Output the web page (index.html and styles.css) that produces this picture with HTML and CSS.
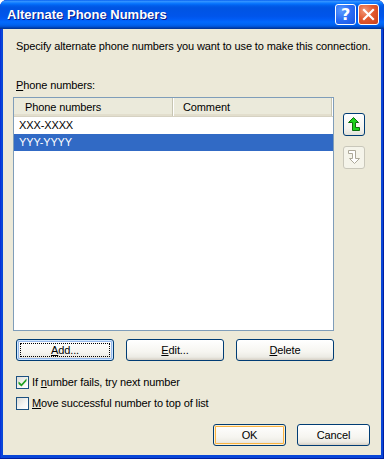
FILE: index.html
```html
<!DOCTYPE html>
<html>
<head>
<meta charset="utf-8">
<link rel="stylesheet" href="styles.css">
</head>
<body>
<div class="window">
  <div class="titlebar">
    <span class="title">Alternate Phone Numbers</span>
    <span class="tb-btn help">?</span>
    <span class="tb-btn close">
      <svg width="13" height="13" viewBox="0 0 13 13"><path d="M2 2 L11 11 M11 2 L2 11" stroke="#fff" stroke-width="2.2" stroke-linecap="square"/></svg>
    </span>
  </div>
  <div class="client">
    <p class="intro">Specify alternate phone numbers you want to use to make this connection.</p>
    <p class="label"><u>P</u>hone numbers:</p>
    <div class="list-area">
      <div class="listview">
        <div class="lv-header">
          <div class="col col1">Phone numbers</div>
          <div class="col col2">Comment</div>
          <div class="col col3"></div>
        </div>
        <div class="lv-row">XXX-XXXX</div>
        <div class="lv-row selected">YYY-YYYY</div>
      </div>
      <div class="arrows">
        <div class="arrow-btn">
          <svg width="12" height="15" viewBox="0 0 12 15">
            <path d="M5.5 0.5 L10.5 5.5 L7.5 5.5 L7.5 10.5 L11.5 10.5 L11.5 13.5 L4.5 13.5 L4.5 5.5 L0.5 5.5 Z" fill="#1BD31B" stroke="#0B6E0B" stroke-width="1" stroke-linejoin="miter"/>
          </svg>
        </div>
        <div class="arrow-btn disabled">
          <svg width="12" height="15" viewBox="0 0 12 15">
            <path d="M0.5 0.5 L7.5 0.5 L7.5 8.5 L11.5 8.5 L6.5 13.5 L1.5 8.5 L4.5 8.5 L4.5 3.5 L0.5 3.5 Z" fill="#fff" stroke="#ACA899" stroke-width="1"/>
          </svg>
        </div>
      </div>
    </div>
    <div class="btn-row">
      <button class="btn focused"><span class="focus-rect"><u>A</u>dd...</span></button>
      <button class="btn"><u>E</u>dit...</button>
      <button class="btn"><u>D</u>elete</button>
    </div>
    <label class="check">
      <span class="box checked">
        <svg width="9" height="9" viewBox="0 0 9 9"><path d="M0.5 3.5 L3.5 6 L8.5 0.5 L8.5 3 L3.5 8.5 L0.5 6 Z" fill="#21A121"/></svg>
      </span>
      <span>If <u>n</u>umber fails, try next number</span>
    </label>
    <label class="check">
      <span class="box"></span>
      <span><u>M</u>ove successful number to top of list</span>
    </label>
    <div class="footer">
      <button class="btn hot">OK</button>
      <button class="btn">Cancel</button>
    </div>
  </div>
</div>
</body>
</html>
```
FILE: styles.css
```css
* { box-sizing: border-box; }
html, body { margin: 0; padding: 0; background: #ffffff; }
body {
  font-family: "Liberation Sans", Arial, sans-serif;
  font-size: 11px;
  letter-spacing: -0.12px;
  color: #000;
}

.window {
  width: 384px;
  height: 459px;
  background: #0846D8;
  border-radius: 7px 7px 0 0;
  display: flex;
  flex-direction: column;
  overflow: hidden;
  box-shadow: inset 0 -1px 0 #001EA0, inset 1px 0 0 #0831D9, inset -1px 0 0 #001EA0;
}

.titlebar {
  height: 29px;
  flex: none;
  display: flex;
  align-items: center;
  padding: 0 5px 0 7px;
  background: linear-gradient(to bottom, #0058EE 0%, #3593FF 4%, #288EFF 7%, #127DFF 10%, #036FFC 14%, #0262EE 18%, #0057E5 24%, #0054E3 30%, #0055EB 56%, #005BF5 66%, #026AFE 76%, #0062EF 86%, #0052D6 92%, #0040AB 96%, #003092 100%);
}
.title {
  flex: 1;
  color: #fff;
  font-weight: bold;
  font-size: 13px;
  letter-spacing: 0;
  text-shadow: 1px 1px 0 #0A1883;
}
.tb-btn {
  width: 21px;
  height: 21px;
  border: 1px solid #fff;
  border-radius: 3px;
  display: flex;
  align-items: center;
  justify-content: center;
  color: #fff;
  margin-left: 2px;
}
.help {
  background: radial-gradient(circle at 30% 30%, #5C9BFF 0%, #2A6CF5 50%, #1A55E0 100%);
  font: bold 16px "DejaVu Sans", sans-serif;
}
.close {
  background: radial-gradient(circle at 30% 30%, #F29A7A 0%, #E35A2F 45%, #C9401A 100%);
}

.client {
  flex: 1;
  margin: 0 3px 4px 3px;
  background: #ECE9D8;
  padding: 11px 0 0 10px;
  display: flex;
  flex-direction: column;
}
.intro { margin: 0 0 0 3px; line-height: 13px; white-space: nowrap; }
.label { margin: 26px 0 0 3px; line-height: 13px; }

.list-area {
  display: flex;
  margin-top: 5px;
}
.listview {
  width: 321px;
  height: 234px;
  border: 1px solid #7F9DB9;
  background: #fff;
}
.lv-header {
  display: flex;
  height: 19px;
  background: #EBEADB;
  border-bottom: 1px solid #D6D2C2;
  box-shadow: inset 0 -2px 0 #E2DECD;
}
.col {
  flex: none;
  line-height: 18px;
  padding-left: 11px;
  border-right: 1px solid #C7C5B2;
  box-shadow: 1px 0 0 #fff;
}
.col1 { width: 159px; }
.col2 { width: 159px; padding-left: 10px; }
.col3 { flex: 1 1 auto; padding: 0; border-right: none; box-shadow: none; }
.lv-row {
  height: 17px;
  line-height: 17px;
  padding-left: 5px;
}
.lv-row.selected { background: #316AC5; color: #fff; }

.arrows {
  display: flex;
  flex-direction: column;
  gap: 10px;
  margin: 16px 0 0 9px;
}
.arrow-btn {
  width: 22px;
  height: 23px;
  border: 1px solid #003C74;
  border-radius: 3px;
  background: linear-gradient(to bottom, #FFFFFF 0%, #F4F3EE 70%, #E3E2DA 100%);
  display: flex;
  align-items: center;
  justify-content: center;
}
.arrow-btn.disabled {
  border-color: #C9C7BA;
  background: #F5F4EA;
}

.btn {
  font: 11px "Liberation Sans", Arial, sans-serif;
  letter-spacing: -0.12px;
  color: #000;
  height: 22px;
  border: 1px solid #003C74;
  border-radius: 3px;
  background: linear-gradient(to bottom, #FFFFFF 0%, #F6F5F0 60%, #ECEBE4 85%, #D6D0C5 100%);
  padding: 0;
  display: flex;
  align-items: center;
  justify-content: center;
}
.btn-row {
  display: flex;
  gap: 12px;
  margin: 8px 0 0 3px;
}
.btn-row .btn { width: 98px; }
.btn.focused {
  box-shadow: inset 0 0 0 1px #CEE7FF, inset 0 0 0 2px #98B8EA;
}
.focus-rect {
  display: flex;
  align-items: center;
  justify-content: center;
  width: calc(100% - 6px);
  height: calc(100% - 6px);
  border: 1px dotted #000;
}
.btn.hot {
  box-shadow: inset 0 0 0 1px #FFF0CF, inset 0 0 0 2px #F9B343;
}

.check {
  display: flex;
  align-items: center;
  gap: 3px;
  margin-left: 3px;
  height: 13px;
  line-height: 13px;
}
.check:first-of-type { margin-top: 15px; }
.check + .check { margin-top: 8px; }
.box {
  width: 13px;
  height: 13px;
  border: 1px solid #1C5180;
  background: linear-gradient(135deg, #DCDCD7 0%, #F6F6F4 60%, #FFFFFF 100%);
  display: flex;
  align-items: center;
  justify-content: center;
}

.footer {
  display: flex;
  justify-content: flex-end;
  gap: 11px;
  margin: 14px 11px 0 0;
}
.footer .btn { width: 73px; }
```
